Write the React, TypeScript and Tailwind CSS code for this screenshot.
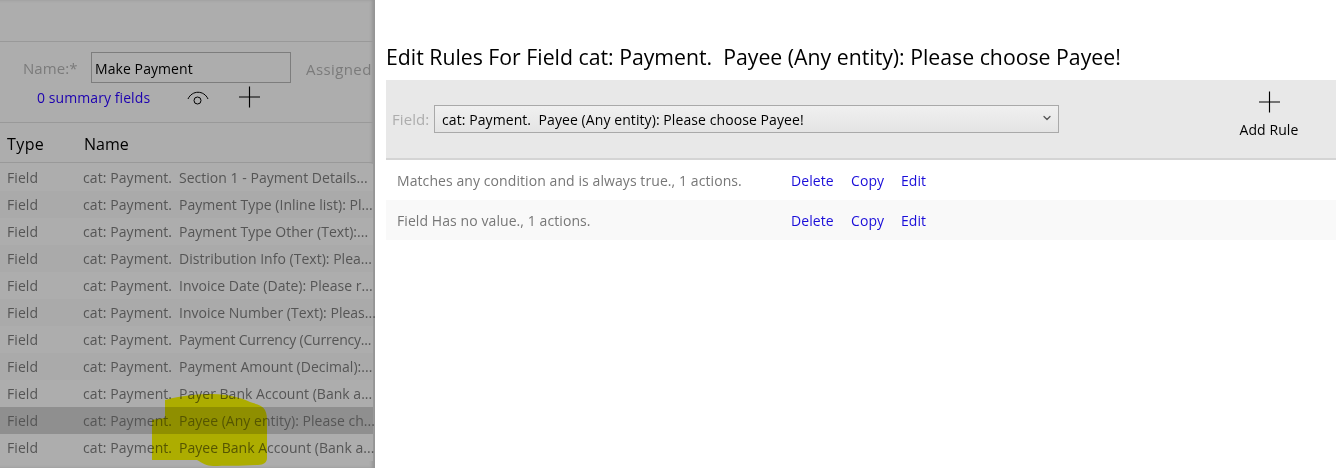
import { ChevronDown } from 'lucide-react';

const fields = [
    'Section 1 - Payment Details...',
    'Payment Type (Inline list): Pl...',
    'Payment Type Other (Text):...',
    'Distribution Info (Text): Plea...',
    'Invoice Date (Date): Please r...',
    'Invoice Number (Text): Pleas...',
    'Payment Currency (Currency...',
    'Payment Amount (Decimal):...',
    'Payer Bank Account (Bank a...',
    'Payee (Any entity): Please ch...',
    'Payee Bank Account (Bank a...',
];

const rules = ['Matches any condition and is always true., 1 actions.', 'Field Has no value., 1 actions.'];

function Plus({ className }: { className: string }) {
    return (
        <svg viewBox="0 0 22 22" className={className} fill="none" stroke="#000" strokeWidth="1.2">
            <path d="M0 11h22M11 0v22" />
        </svg>
    );
}

export default function App() {
    return (
        <div className="flex h-[468px] w-[1336px] overflow-hidden bg-white font-['Open_Sans',sans-serif] text-[14px] tracking-[0.08px]">
            <div className="relative flex w-[375px] shrink-0 flex-col bg-[#adadad] pr-[2px] shadow-[inset_-3px_0_3px_#959595]">
                <div className="h-[42px] border-b border-[#999]" />
                <div className="h-[81px] border-b border-[#999]">
                    <div className="mt-[10px] flex items-center">
                        <span className="ml-[23px] w-[68px] pt-[2px] text-[15px] text-[#7b7b7b]">Name:*</span>
                        <div className="flex h-[31px] w-[200px] items-center border border-[#7d7d7d] pl-[3px] pt-[2px] text-black">Make Payment</div>
                        <span className="ml-[15px] whitespace-nowrap pt-[3px] text-[15px] tracking-[0.4px] text-[#7b7b7b]">Assigned</span>
                    </div>
                    <div className="mt-[4px] flex items-center">
                        <span className="ml-[37px] w-[150px] text-[#1c00b0]">0 summary fields</span>
                        <svg viewBox="0 0 22 14" className="h-[14px] w-[22px]" fill="none" stroke="#000" strokeWidth="1">
                            <path d="M1 8C5 -1 17 -1 21 8" />
                            <circle cx="10.5" cy="9.5" r="3.5" />
                        </svg>
                        <Plus className="ml-[30px] -mt-[2px] h-[22px] w-[21px]" />
                    </div>
                </div>
                <div className="flex h-[40px] items-center border-b border-[#999] pt-[2px] text-[16px] text-black">
                    <span className="ml-[7px] w-[77px] tracking-[0.4px]">Type</span>
                    <span className="tracking-normal">Name</span>
                </div>
                <div className="pt-[1px]">
                    {fields.map((name, i) => (
                        <div
                            key={name}
                            className={`flex h-[27px] items-center whitespace-nowrap text-[#555] ${
                                i === 9 ? 'bg-[#8f8f8f]' : i % 2 === 1 ? 'bg-[#aaaaaa]' : 'bg-[#adadad]'
                            }`}
                        >
                            <span className="ml-[7px] w-[76px] shrink-0">Field</span>
                            <span className="w-[96px] shrink-0">cat: Payment.</span>
                            <span className={`shrink-0 ${i === 6 ? 'tracking-[-0.2px]' : 'tracking-[0.02px]'}`}>{name}</span>
                        </div>
                    ))}
                </div>
                <svg viewBox="0 0 116 72" className="absolute left-[152px] top-[394px] h-[72px] w-[116px] mix-blend-multiply">
                    <path d="M13 6C30 1 50 0 61 0C75 0 90 4 98 8C105 10 111 12 113 16C115 20 115 24 115 28L115 64C115 68 112 71 106 71C90 72 72 72 61 72C55 72 50 69 45 66L0 66L0 26C3 25 8 25 13 24Z" fill="#ffff00" />
                </svg>
            </div>
            <div className="min-w-0 flex-1 pl-[11px]">
                <h1 className="mt-[43px] h-[37px] whitespace-nowrap text-[21.25px] leading-[27px] tracking-normal text-black">
                    Edit Rules For Field cat: Payment.&nbsp; Payee (Any entity): Please choose Payee!
                </h1>
                <div className="flex h-[80px] items-center border-b-2 border-[#d4d4d4] bg-[#e8e8e8]">
                    <span className="ml-[6px] w-[42px] text-[15px] text-[#adadad]">Field:</span>
                    <div className="flex h-[28px] w-[625px] items-center justify-between border border-[#a9a9a9] bg-gradient-to-b from-[#f0f0f0] to-[#e4e4e4] pl-[7px] pr-[5px] text-black">
                        <span className="whitespace-pre">cat: Payment.  Payee (Any entity): Please choose Payee!</span>
                        <ChevronDown className="-mt-[2px] h-[12px] w-[12px] text-[#555]" strokeWidth={2.5} />
                    </div>
                    <div className="ml-[180px] -mt-[8px] flex w-[60px] flex-col items-center text-black">
                        <Plus className="h-[22px] w-[21px]" />
                        <span className="mt-[6px] whitespace-nowrap">Add Rule</span>
                    </div>
                </div>
                {rules.map((rule, i) => (
                    <div key={rule} className={`flex h-[40px] items-center ${i === 1 ? 'bg-[#f9f9f9]' : 'bg-white'}`}>
                        <span className="ml-[11px] w-[394px] whitespace-nowrap text-[#777]">{rule}</span>
                        <span className="w-[60px] text-[#1a0dd9]">Delete</span>
                        <span className="w-[50px] text-[#1a0dd9]">Copy</span>
                        <span className="text-[#1a0dd9]">Edit</span>
                    </div>
                ))}
            </div>
        </div>
    );
}
